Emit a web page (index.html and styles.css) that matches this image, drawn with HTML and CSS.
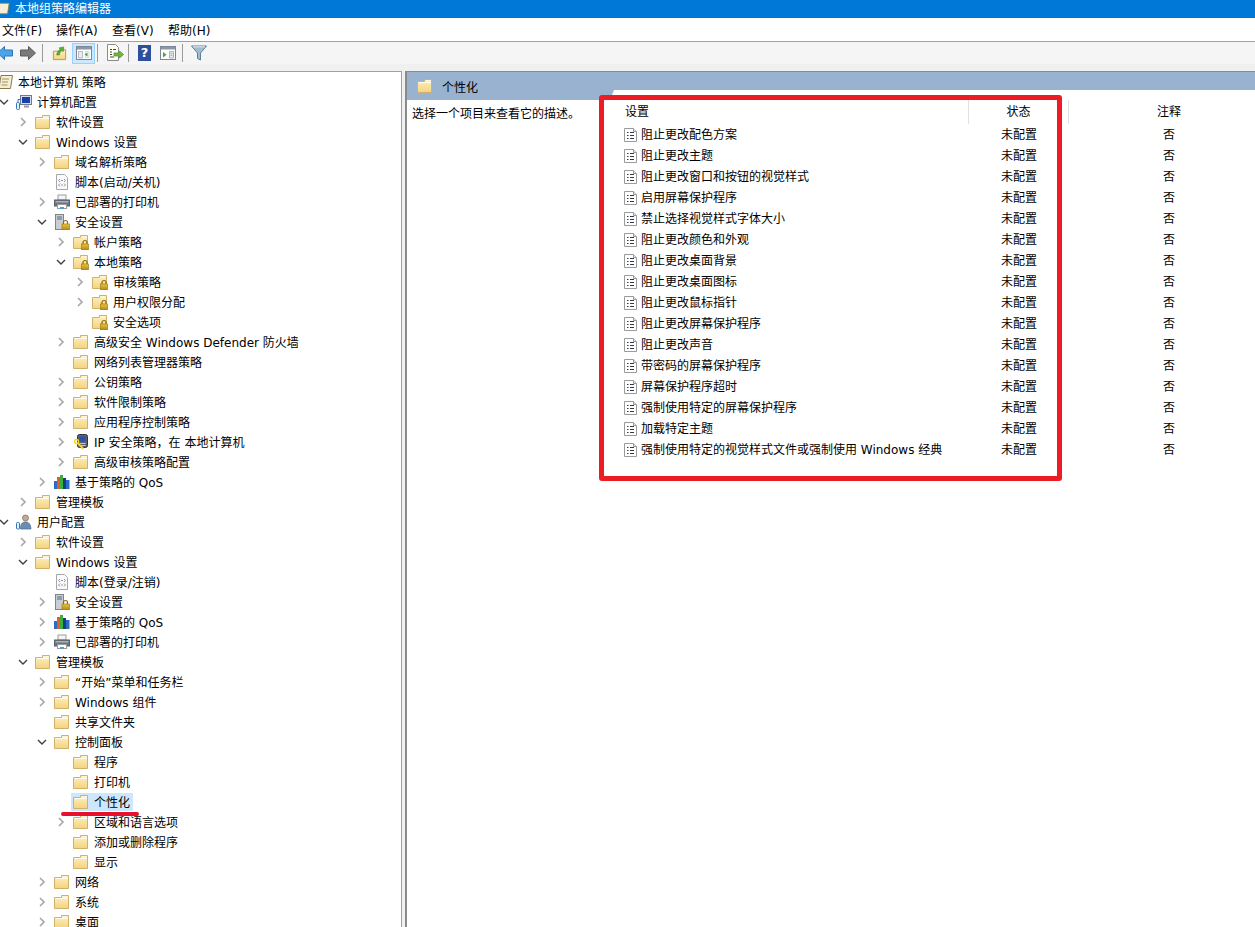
FILE: index.html

```html
<!DOCTYPE html>
<html lang="zh-CN">
<head>
    <meta charset="UTF-8">
    <title>本地组策略编辑器</title>
    <link rel="stylesheet" href="styles.css">
</head>
<body>
    <svg class="defs" width="0" height="0">
        <defs>
            <linearGradient id="fy" x1="0" y1="0" x2="0" y2="1">
                <stop offset="0" stop-color="#fdf1c4"/>
                <stop offset="1" stop-color="#f4d37c"/>
            </linearGradient>
            <linearGradient id="gold" x1="0" y1="0" x2="0" y2="1">
                <stop offset="0" stop-color="#e8c440"/>
                <stop offset="1" stop-color="#b58a12"/>
            </linearGradient>
            <symbol id="chev-r" viewBox="0 0 8 10"><path d="M2 1l4 4-4 4" fill="none" stroke="#a6a6a6" stroke-width="1.6"/></symbol>
            <symbol id="chev-d" viewBox="0 0 10 8"><path d="M1 2l4 4 4-4" fill="none" stroke="#404040" stroke-width="1.4"/></symbol>
            <symbol id="folder" viewBox="0 0 16 16">
                <path d="M.5 14.500V3.500H7.500V1.500H14.500V14.500Z" fill="url(#fy)" stroke="#d0b06a"/>
                <path d="M1.500 4.500H14" fill="none" stroke="#fff" stroke-opacity=".8"/>
                <path d="M8.500 2.500H13.500V3.500H8.500Z" fill="#fffbe8"/>
            </symbol>
            <symbol id="folder-lock" viewBox="0 0 16 16">
                <path d="M.5 14.500V3.500H7.500V1.500H14.500V14.500Z" fill="url(#fy)" stroke="#d0b06a"/>
                <path d="M8.500 2.500H13.500V3.500H8.500Z" fill="#fffbe8"/>
                <path d="M10 10V8.500a2 2 0 0 1 4 0V10" fill="none" stroke="#8a6a10" stroke-width="1.200"/>
                <rect x="8.500" y="10" width="7" height="6" fill="url(#gold)" stroke="#96720f" stroke-width=".6"/>
            </symbol>
            <symbol id="doc" viewBox="0 0 16 16">
                <path d="M1.500 2.500H10.500L13.500 5.500V15.500H1.500Z" fill="#fff" stroke="#9a9a9a"/>
                <path d="M10.500 2.500V5.500H13.500" fill="#e6e6e6" stroke="#9a9a9a"/>
                <path d="M4 6.500H5.500M7 6.500H11M4 9.500H5.500M7 9.500H11M4 12.500H5.500M7 12.500H11" stroke="#2f3a46"/>
            </symbol>
            <symbol id="script" viewBox="0 0 16 16">
                <path d="M2.500 .5H10.500L13.500 3.500V15.500H2.500Z" fill="#fbfbfb" stroke="#a8a8a8"/>
                <path d="M6 5L4.500 6.500 6 8M10 5l1.500 1.500L10 8M6 9.500L4.500 11 6 12.500M10 9.500l1.500 1.500L10 12.500M7 6.500h2M7 11h2" fill="none" stroke="#8894a4"/>
            </symbol>
            <symbol id="printer" viewBox="0 0 16 16">
                <rect x="4" y="1" width="8" height="5" fill="#f4f4f4" stroke="#a0a0a0"/>
                <rect x=".5" y="6" width="15" height="6" fill="#6b7480" stroke="#59606a"/>
                <rect x="1.500" y="7" width="13" height="1.500" fill="#a8b0b8"/>
                <rect x="3.500" y="10.500" width="9" height="4" fill="#fff" stroke="#9a9a9a"/>
                <rect x="6" y="13" width="4" height="2" fill="#4aa0d8"/>
            </symbol>
            <symbol id="server-lock" viewBox="0 0 16 16">
                <rect x="1.500" y=".5" width="8" height="15" fill="#c9ced4" stroke="#7d858e"/>
                <path d="M3 3h5M3 5h5" stroke="#5f6870"/>
                <path d="M9.500 10V8.500a2 2 0 0 1 4 0V10" fill="none" stroke="#8a6a10" stroke-width="1.200"/>
                <rect x="8" y="10" width="7.500" height="6" fill="url(#gold)" stroke="#96720f" stroke-width=".6"/>
            </symbol>
            <symbol id="ipsec" viewBox="0 0 16 16">
                <rect x="4.500" y=".5" width="10" height="13" rx="2" fill="#5c636c" stroke="#2f343a"/>
                <rect x="6.500" y="2.500" width="6" height="5" fill="#2f4fa8"/>
                <path d="M6.500 9.500h6M6.500 11.500h6" stroke="#c4c8cc"/>
                <circle cx="3.500" cy="7.500" r="2" fill="none" stroke="#f2d820" stroke-width="1.400"/>
                <path d="M4.500 9l6 6" stroke="#f2d820" stroke-width="1.800"/>
            </symbol>
            <symbol id="qos" viewBox="0 0 16 16">
                <rect x="0" y="7" width="3" height="8" fill="#2b6cc4"/>
                <rect x="3" y="3" width="3" height="12" fill="#e85a2c"/>
                <rect x="6" y="1" width="3" height="14" fill="#3cae3c"/>
                <rect x="9" y="4" width="3" height="11" fill="#16407e"/>
                <rect x="12" y="6" width="3.500" height="9" fill="#2b6cc4"/>
            </symbol>
            <symbol id="computer" viewBox="0 0 16 16">
                <rect x="4.500" y="1.500" width="11" height="9" fill="#d6dee8" stroke="#6f7c8c"/>
                <rect x="6" y="3" width="8" height="6" fill="#1b3fb0"/>
                <path d="M8 11.500h5v2H8z" fill="#8e99a6"/>
                <rect x=".5" y="8.500" width="3" height="7" rx="1" fill="#e8f0f8" stroke="#2f77b8"/>
                <path d="M2 8.500V5.500H5" fill="none" stroke="#2f77b8"/>
            </symbol>
            <symbol id="user" viewBox="0 0 16 16">
                <circle cx="9.500" cy="4" r="3" fill="#c8a890" stroke="#7c6a5c" stroke-width=".7"/>
                <path d="M4.500 15c0-5 1.500-7 5-7s5 2 5.500 7z" fill="#6b8cb4" stroke="#4a6a90" stroke-width=".7"/>
                <rect x=".5" y="8.500" width="3" height="6.500" rx="1" fill="#e8f0f8" stroke="#2f77b8"/>
            </symbol>
        </defs>
    </svg>

    <div class="titlebar">
        <svg class="title-icon" viewBox="0 0 16 16"><path d="M3 1.500H15L13 14.500H1L3 11Z" fill="#f6eed2" stroke="#8a7a50"/></svg>
        <span>本地组策略编辑器</span>
    </div>

    <div class="menubar">
        <span class="menu-item">文件(F)</span>
        <span class="menu-item">操作(A)</span>
        <span class="menu-item">查看(V)</span>
        <span class="menu-item">帮助(H)</span>
    </div>

    <div class="toolbar">
        <svg class="tool tool-back" viewBox="0 0 16 14"><path d="M.5 7L7.500 .5V4H15.500V10H7.500V13.500Z" fill="#4aa5e8" stroke="#2a78b8"/></svg>
        <svg class="tool tool-fwd" viewBox="0 0 16 14"><path d="M15.500 7L8.500 .5V4H.5V10H8.500V13.500Z" fill="#7a7a7a" stroke="#5a5a5a"/></svg>
        <span class="tool-sep sep-a"></span>
        <svg class="tool tool-up" viewBox="0 0 16 16">
            <path d="M1.500 14.500V5.500H8.500V4H14.500V14.500Z" fill="url(#fy)" stroke="#b8964c"/>
            <path d="M5 9.500C5.500 6 7 4.500 9 3.500L7.500 2 12.500 1 12 6 10.500 4.800C9 6 8 7.500 8 9.500Z" fill="#5cae3a" stroke="#3a8420" stroke-width=".6"/>
        </svg>
        <span class="tool-btn">
            <svg class="tool-pane" viewBox="0 0 16 14">
                <rect x=".5" y=".5" width="15" height="13" fill="#fff" stroke="#7c8894"/>
                <rect x="1" y="1" width="14" height="2.500" fill="#8c98a4"/>
                <path d="M2.500 5.500H6.500V12H2.500Z" fill="#e8ecf0" stroke="#8c98a4" stroke-width=".6"/>
                <path d="M13 5.500V11.500H9.500V5.500Z" fill="#f4f6f8" stroke="#c0c8d0" stroke-width=".6"/>
                <path d="M11.500 6.500L8.500 8.500 11.500 10.500Z" fill="#3caa3c"/>
            </svg>
        </span>
        <span class="tool-sep sep-b"></span>
        <svg class="tool tool-export" viewBox="0 0 18 18">
            <path d="M1.500 .5H9.500L12.500 3.500V16.500H1.500Z" fill="#fffdf0" stroke="#8a8a8a"/>
            <path d="M4 5.500H6M7 5.500H10M4 8H6M4 10.500H6M4 13H8" stroke="#444"/>
            <path d="M17.500 10.500L13.500 7V9H8V12H13.500V14Z" fill="#6cbb3c" stroke="#3f8f20" stroke-width=".7"/>
        </svg>
        <span class="tool-sep sep-c"></span>
        <span class="tool-help">?</span>
        <svg class="tool tool-action" viewBox="0 0 16 14">
            <rect x=".5" y=".5" width="15" height="13" fill="#fff" stroke="#7c8894"/>
            <rect x="1" y="1" width="14" height="2.500" fill="#8c98a4"/>
            <path d="M3 6V11.500L6.500 8.700Z" fill="#3caa3c"/>
            <path d="M9.500 5.500H13.500V12H9.500ZM10.500 7.500H12.500M10.500 9.500H12.500" fill="#e8ecf0" stroke="#8c98a4" stroke-width=".7"/>
        </svg>
        <span class="tool-sep sep-d"></span>
        <svg class="tool tool-filter" viewBox="0 0 16 16">
            <path d="M.5 1H15.500L9.500 8V15L6.500 13.500V8Z" fill="#9fbcd0" stroke="#5f7f94"/>
            <path d="M2 1.800H14" stroke="#e4eef4"/>
        </svg>
    </div>

    <div class="main">
        <div class="tree-pane">
            <div class="row lv0 root"><span class="node"><svg class="ic root-ic" viewBox="0 0 16 16"><path d="M4 1.500H15.500L13.500 14.500H.5L2.500 11Z" fill="#f6eed2" stroke="#8a7a50"/><path d="M5 5h7M5 8h6M4.500 11h6" stroke="#a09060"/></svg><span>本地计算机 策略</span></span></div>
            <div class="row lv0"><svg class="chev open"><use href="#chev-d"/></svg><span class="node"><svg class="ic"><use href="#computer"/></svg><span>计算机配置</span></span></div>
            <div class="row lv1"><svg class="chev"><use href="#chev-r"/></svg><span class="node"><svg class="ic"><use href="#folder"/></svg><span>软件设置</span></span></div>
            <div class="row lv1"><svg class="chev open"><use href="#chev-d"/></svg><span class="node"><svg class="ic"><use href="#folder"/></svg><span>Windows 设置</span></span></div>
            <div class="row lv2"><svg class="chev"><use href="#chev-r"/></svg><span class="node"><svg class="ic"><use href="#folder"/></svg><span>域名解析策略</span></span></div>
            <div class="row lv2"><span class="chev"></span><span class="node"><svg class="ic"><use href="#script"/></svg><span>脚本(启动/关机)</span></span></div>
            <div class="row lv2"><svg class="chev"><use href="#chev-r"/></svg><span class="node"><svg class="ic"><use href="#printer"/></svg><span>已部署的打印机</span></span></div>
            <div class="row lv2"><svg class="chev open"><use href="#chev-d"/></svg><span class="node"><svg class="ic"><use href="#server-lock"/></svg><span>安全设置</span></span></div>
            <div class="row lv3"><svg class="chev"><use href="#chev-r"/></svg><span class="node"><svg class="ic"><use href="#folder-lock"/></svg><span>帐户策略</span></span></div>
            <div class="row lv3"><svg class="chev open"><use href="#chev-d"/></svg><span class="node"><svg class="ic"><use href="#folder-lock"/></svg><span>本地策略</span></span></div>
            <div class="row lv4"><svg class="chev"><use href="#chev-r"/></svg><span class="node"><svg class="ic"><use href="#folder-lock"/></svg><span>审核策略</span></span></div>
            <div class="row lv4"><svg class="chev"><use href="#chev-r"/></svg><span class="node"><svg class="ic"><use href="#folder-lock"/></svg><span>用户权限分配</span></span></div>
            <div class="row lv4"><span class="chev"></span><span class="node"><svg class="ic"><use href="#folder-lock"/></svg><span>安全选项</span></span></div>
            <div class="row lv3"><svg class="chev"><use href="#chev-r"/></svg><span class="node"><svg class="ic"><use href="#folder"/></svg><span>高级安全 Windows Defender 防火墙</span></span></div>
            <div class="row lv3"><span class="chev"></span><span class="node"><svg class="ic"><use href="#folder"/></svg><span>网络列表管理器策略</span></span></div>
            <div class="row lv3"><svg class="chev"><use href="#chev-r"/></svg><span class="node"><svg class="ic"><use href="#folder"/></svg><span>公钥策略</span></span></div>
            <div class="row lv3"><svg class="chev"><use href="#chev-r"/></svg><span class="node"><svg class="ic"><use href="#folder"/></svg><span>软件限制策略</span></span></div>
            <div class="row lv3"><svg class="chev"><use href="#chev-r"/></svg><span class="node"><svg class="ic"><use href="#folder"/></svg><span>应用程序控制策略</span></span></div>
            <div class="row lv3"><svg class="chev"><use href="#chev-r"/></svg><span class="node"><svg class="ic"><use href="#ipsec"/></svg><span>IP 安全策略，在 本地计算机</span></span></div>
            <div class="row lv3"><svg class="chev"><use href="#chev-r"/></svg><span class="node"><svg class="ic"><use href="#folder"/></svg><span>高级审核策略配置</span></span></div>
            <div class="row lv2"><svg class="chev"><use href="#chev-r"/></svg><span class="node"><svg class="ic"><use href="#qos"/></svg><span>基于策略的 QoS</span></span></div>
            <div class="row lv1"><svg class="chev"><use href="#chev-r"/></svg><span class="node"><svg class="ic"><use href="#folder"/></svg><span>管理模板</span></span></div>
            <div class="row lv0"><svg class="chev open"><use href="#chev-d"/></svg><span class="node"><svg class="ic"><use href="#user"/></svg><span>用户配置</span></span></div>
            <div class="row lv1"><svg class="chev"><use href="#chev-r"/></svg><span class="node"><svg class="ic"><use href="#folder"/></svg><span>软件设置</span></span></div>
            <div class="row lv1"><svg class="chev open"><use href="#chev-d"/></svg><span class="node"><svg class="ic"><use href="#folder"/></svg><span>Windows 设置</span></span></div>
            <div class="row lv2"><span class="chev"></span><span class="node"><svg class="ic"><use href="#script"/></svg><span>脚本(登录/注销)</span></span></div>
            <div class="row lv2"><svg class="chev"><use href="#chev-r"/></svg><span class="node"><svg class="ic"><use href="#server-lock"/></svg><span>安全设置</span></span></div>
            <div class="row lv2"><svg class="chev"><use href="#chev-r"/></svg><span class="node"><svg class="ic"><use href="#qos"/></svg><span>基于策略的 QoS</span></span></div>
            <div class="row lv2"><svg class="chev"><use href="#chev-r"/></svg><span class="node"><svg class="ic"><use href="#printer"/></svg><span>已部署的打印机</span></span></div>
            <div class="row lv1"><svg class="chev open"><use href="#chev-d"/></svg><span class="node"><svg class="ic"><use href="#folder"/></svg><span>管理模板</span></span></div>
            <div class="row lv2"><svg class="chev"><use href="#chev-r"/></svg><span class="node"><svg class="ic"><use href="#folder"/></svg><span>“开始”菜单和任务栏</span></span></div>
            <div class="row lv2"><svg class="chev"><use href="#chev-r"/></svg><span class="node"><svg class="ic"><use href="#folder"/></svg><span>Windows 组件</span></span></div>
            <div class="row lv2"><span class="chev"></span><span class="node"><svg class="ic"><use href="#folder"/></svg><span>共享文件夹</span></span></div>
            <div class="row lv2"><svg class="chev open"><use href="#chev-d"/></svg><span class="node"><svg class="ic"><use href="#folder"/></svg><span>控制面板</span></span></div>
            <div class="row lv3"><span class="chev"></span><span class="node"><svg class="ic"><use href="#folder"/></svg><span>程序</span></span></div>
            <div class="row lv3"><span class="chev"></span><span class="node"><svg class="ic"><use href="#folder"/></svg><span>打印机</span></span></div>
            <div class="row lv3"><span class="chev"></span><span class="node selected"><svg class="ic"><use href="#folder"/></svg><span>个性化</span></span></div>
            <div class="row lv3"><svg class="chev"><use href="#chev-r"/></svg><span class="node"><svg class="ic"><use href="#folder"/></svg><span>区域和语言选项</span></span></div>
            <div class="row lv3"><span class="chev"></span><span class="node"><svg class="ic"><use href="#folder"/></svg><span>添加或删除程序</span></span></div>
            <div class="row lv3"><span class="chev"></span><span class="node"><svg class="ic"><use href="#folder"/></svg><span>显示</span></span></div>
            <div class="row lv2"><svg class="chev"><use href="#chev-r"/></svg><span class="node"><svg class="ic"><use href="#folder"/></svg><span>网络</span></span></div>
            <div class="row lv2"><svg class="chev"><use href="#chev-r"/></svg><span class="node"><svg class="ic"><use href="#folder"/></svg><span>系统</span></span></div>
            <div class="row lv2"><svg class="chev"><use href="#chev-r"/></svg><span class="node"><svg class="ic"><use href="#folder"/></svg><span>桌面</span></span></div>
        </div>

        <div class="detail-pane">
            <div class="detail-head">
                <svg class="ic"><use href="#folder"/></svg>
                <span>个性化</span>
            </div>
            <div class="detail-body">
                <div class="desc">选择一个项目来查看它的描述。</div>
                <div class="settings">
                    <div class="set-head">
                        <span class="col-name">设置</span>
                        <span class="col-state">状态</span>
                        <span class="col-note">注释</span>
                    </div>
                    <div class="set-row"><span class="col-name"><svg class="ic"><use href="#doc"/></svg>阻止更改配色方案</span><span class="col-state">未配置</span><span class="col-note">否</span></div>
                    <div class="set-row"><span class="col-name"><svg class="ic"><use href="#doc"/></svg>阻止更改主题</span><span class="col-state">未配置</span><span class="col-note">否</span></div>
                    <div class="set-row"><span class="col-name"><svg class="ic"><use href="#doc"/></svg>阻止更改窗口和按钮的视觉样式</span><span class="col-state">未配置</span><span class="col-note">否</span></div>
                    <div class="set-row"><span class="col-name"><svg class="ic"><use href="#doc"/></svg>启用屏幕保护程序</span><span class="col-state">未配置</span><span class="col-note">否</span></div>
                    <div class="set-row"><span class="col-name"><svg class="ic"><use href="#doc"/></svg>禁止选择视觉样式字体大小</span><span class="col-state">未配置</span><span class="col-note">否</span></div>
                    <div class="set-row"><span class="col-name"><svg class="ic"><use href="#doc"/></svg>阻止更改颜色和外观</span><span class="col-state">未配置</span><span class="col-note">否</span></div>
                    <div class="set-row"><span class="col-name"><svg class="ic"><use href="#doc"/></svg>阻止更改桌面背景</span><span class="col-state">未配置</span><span class="col-note">否</span></div>
                    <div class="set-row"><span class="col-name"><svg class="ic"><use href="#doc"/></svg>阻止更改桌面图标</span><span class="col-state">未配置</span><span class="col-note">否</span></div>
                    <div class="set-row"><span class="col-name"><svg class="ic"><use href="#doc"/></svg>阻止更改鼠标指针</span><span class="col-state">未配置</span><span class="col-note">否</span></div>
                    <div class="set-row"><span class="col-name"><svg class="ic"><use href="#doc"/></svg>阻止更改屏幕保护程序</span><span class="col-state">未配置</span><span class="col-note">否</span></div>
                    <div class="set-row"><span class="col-name"><svg class="ic"><use href="#doc"/></svg>阻止更改声音</span><span class="col-state">未配置</span><span class="col-note">否</span></div>
                    <div class="set-row"><span class="col-name"><svg class="ic"><use href="#doc"/></svg>带密码的屏幕保护程序</span><span class="col-state">未配置</span><span class="col-note">否</span></div>
                    <div class="set-row"><span class="col-name"><svg class="ic"><use href="#doc"/></svg>屏幕保护程序超时</span><span class="col-state">未配置</span><span class="col-note">否</span></div>
                    <div class="set-row"><span class="col-name"><svg class="ic"><use href="#doc"/></svg>强制使用特定的屏幕保护程序</span><span class="col-state">未配置</span><span class="col-note">否</span></div>
                    <div class="set-row"><span class="col-name"><svg class="ic"><use href="#doc"/></svg>加载特定主题</span><span class="col-state">未配置</span><span class="col-note">否</span></div>
                    <div class="set-row"><span class="col-name"><svg class="ic"><use href="#doc"/></svg>强制使用特定的视觉样式文件或强制使用 Windows 经典</span><span class="col-state">未配置</span><span class="col-note">否</span></div>
                </div>
            </div>
        </div>
    </div>

    <!-- annotations drawn on top of the screenshot -->
    <div class="mark-cut"></div>
    <div class="mark-box"></div>
    <div class="mark-line"></div>
</body>
</html>
```

FILE: styles.css

```css
html, body {
    margin: 0;
    padding: 0;
    height: 927px;
    overflow: hidden;
}
body {
    position: relative;
    background: #f0f0f0;
    color: #000;
    font-family: "DejaVu Sans", "Noto Sans CJK SC", sans-serif;
    font-size: 12px;
    line-height: 16px;
}
.defs {
    position: absolute;
}

/* title + menu + toolbar */
.titlebar {
    height: 18px;
    background: #0078d7;
    color: #fff;
    display: flex;
    align-items: center;
    padding-bottom: 1px;
    box-sizing: border-box;
    overflow: hidden;
    line-height: 14px;
}
.title-icon {
    width: 13px;
    height: 13px;
    margin-left: -3px;
    margin-right: 5px;
    flex: none;
}
.menubar {
    height: 23px;
    background: #fff;
    border-bottom: 1px solid #a0a0a0;
    display: flex;
    align-items: center;
}
.menu-item {
    width: 56px;
    padding-top: 2px;
}
.menu-item:first-child {
    padding-left: 2px;
    width: 54px;
}
.toolbar {
    height: 22px;
    background: #f5f5f5;
    display: flex;
    align-items: center;
}
.tool {
    flex: none;
}
.tool-back {
    width: 16px;
    height: 14px;
    margin-left: -3px;
}
.tool-fwd {
    width: 16px;
    height: 14px;
    margin-left: 7px;
}
.tool-sep {
    width: 1px;
    height: 18px;
    background: #9a9a9a;
    flex: none;
}
.sep-a { margin-left: 6px; }
.tool-up {
    width: 15px;
    height: 15px;
    margin-left: 9px;
}
.tool-btn {
    width: 23px;
    height: 21px;
    margin-left: 5px;
    box-sizing: border-box;
    background: #cce8ff;
    border: 1px solid #99d1ff;
    display: flex;
    align-items: center;
    justify-content: center;
    flex: none;
}
.tool-pane {
    width: 16px;
    height: 14px;
}
.sep-b { margin-left: 2px; }
.tool-export {
    width: 18px;
    height: 18px;
    margin-left: 8px;
}
.sep-c { margin-left: 4px; }
.tool-help {
    width: 13px;
    height: 16px;
    margin-left: 9px;
    background: #2c4f9e;
    color: #fff;
    font-weight: bold;
    font-size: 13px;
    line-height: 16px;
    text-align: center;
    flex: none;
}
.tool-action {
    width: 16px;
    height: 14px;
    margin-left: 9px;
}
.sep-d { margin-left: 6px; }
.tool-filter {
    width: 16px;
    height: 16px;
    margin-left: 8px;
}

/* main split */
.main {
    display: flex;
    padding-top: 7px;
    height: 863px;
    box-sizing: border-box;
}
.tree-pane {
    width: 402px;
    box-sizing: border-box;
    background: #fff;
    border-top: 1px solid #a0a0a0;
    border-right: 1px solid #a0a0a0;
    overflow: hidden;
    flex: none;
}
.row {
    height: 20px;
    display: flex;
    align-items: center;
    white-space: nowrap;
}
.lv0 { padding-left: 0; }
.lv1 { padding-left: 19px; }
.lv2 { padding-left: 38px; }
.lv3 { padding-left: 57px; }
.lv4 { padding-left: 76px; }
.chev {
    width: 8px;
    height: 10px;
    margin-right: 8px;
    flex: none;
}
.chev.open {
    width: 10px;
    height: 8px;
    margin-left: -1px;
    margin-right: 7px;
}
.node {
    display: flex;
    align-items: center;
    height: 18px;
    margin-left: -2px;
    padding: 0 3px 0 2px;
}
.node span {
    padding-top: 2px;
}
.node.selected {
    background: #cce8ff;
}
.ic {
    width: 16px;
    height: 16px;
    margin-right: 5px;
    flex: none;
}
.root .node {
    margin-left: -5px;
}

/* right side */
.detail-pane {
    flex: 1;
    margin-left: 3px;
    background: #fff;
    border-top: 1px solid #8a8a8a;
    border-left: 2px solid #8a8a8a;
    min-width: 0;
}
.detail-head {
    height: 28px;
    background: #98b2d0;
    display: flex;
    align-items: center;
    padding-left: 10px;
}
.detail-head .ic {
    margin-right: 9px;
}
.detail-head span {
    padding-top: 4px;
}
.detail-body {
    display: flex;
}
.desc {
    width: 208px;
    padding: 6px 0 0 5px;
    flex: none;
}
.settings {
    flex: 1;
    min-width: 0;
}
.set-head {
    height: 24px;
    display: flex;
}
.set-row {
    height: 21px;
    box-sizing: border-box;
    padding-top: 3px;
    display: flex;
    white-space: nowrap;
}
.col-name {
    width: 349px;
    box-sizing: border-box;
    padding-left: 5px;
    display: flex;
    flex: none;
}
.set-row .col-name {
    padding-left: 3px;
}
.set-row .ic {
    margin-top: -1px;
    margin-right: 2px;
}
.col-state {
    width: 100px;
    box-sizing: border-box;
    text-align: center;
    flex: none;
}
.col-note {
    flex: 1;
    padding-left: 14px;
    text-align: center;
}
.set-head span {
    padding-top: 4px;
}
.set-head .col-name,
.set-head .col-state {
    height: 24px;
    border-right: 1px solid #e0e0e0;
}

/* hand-drawn marks */
.mark-cut {
    position: absolute;
    left: 610px;
    top: 90px;
    right: 0;
    height: 10px;
    background: #fff;
    clip-path: polygon(4px 0, 100% 0, 100% 100%, 0 100%);
}
.mark-box {
    position: absolute;
    left: 599px;
    top: 95px;
    width: 453px;
    height: 376px;
    border: 5px solid #ed1c24;
    border-radius: 3px;
}
.mark-line {
    position: absolute;
    left: 61px;
    top: 812px;
    width: 78px;
    height: 4px;
    background: #e8112d;
    border-radius: 2px;
}
```
